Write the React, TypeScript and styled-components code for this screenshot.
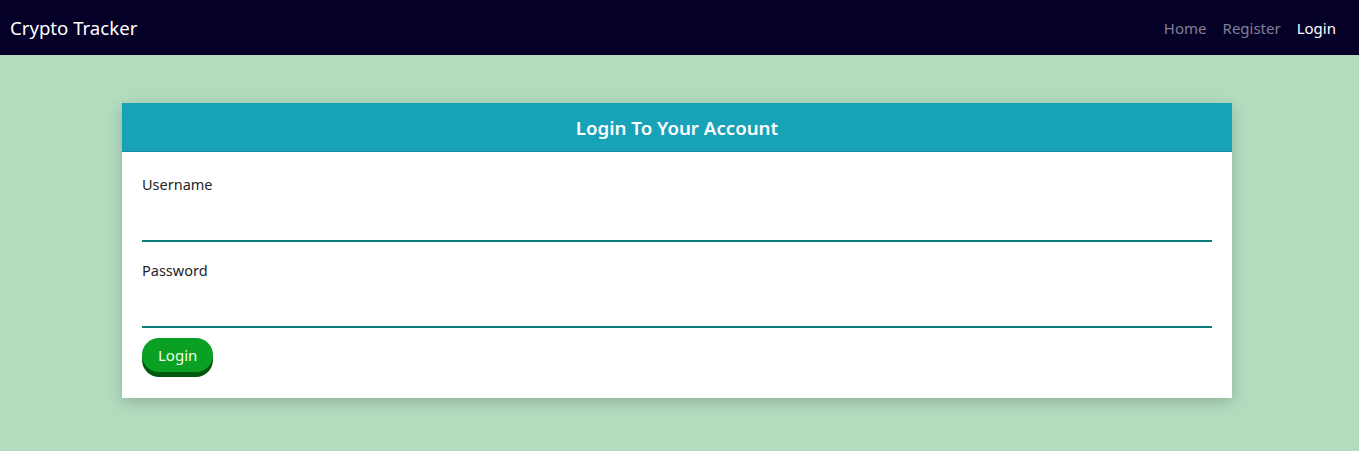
import React from "react";
import styled, { createGlobalStyle } from "styled-components";

const Global = createGlobalStyle`
  html, body { margin: 0; padding: 0; }
  body {
    background: #b3dcbf;
    font-family: "Noto Sans", "Open Sans", sans-serif;
    min-height: 451px;
  }
  * { box-sizing: border-box; }
`;

const NavBar = styled.nav`
  height: 55px;
  background: #040027;
  display: flex;
  align-items: center;
  justify-content: space-between;
  padding: 0 23px 0 10px;
`;

const Brand = styled.a`
  color: #ffffff;
  font-size: 18.6px;
  text-decoration: none;
`;

const NavLinks = styled.div`
  display: flex;
  gap: 16px;
`;

const NavLink = styled.a<{ $active?: boolean }>`
  color: ${(p) => (p.$active ? "#ffffff" : "rgba(255,255,255,0.5)")};
  font-size: 15px;
  text-decoration: none;
`;

const Main = styled.main`
  padding: 48px 127px 0 122px;
`;

const Card = styled.section`
  width: 1110px;
  background: #ffffff;
  box-shadow: 0 4px 14px rgba(0, 0, 0, 0.2);
`;

const CardHeader = styled.header`
  height: 49px;
  background: #17a2b8;
  border-bottom: 1px solid #138d9f;
  display: flex;
  align-items: center;
  justify-content: center;
  color: #ffffff;
  font-size: 18.7px;
  font-weight: 600;
`;

const CardBody = styled.form`
  padding: 20px 20px 20px 20px;
  display: flex;
  flex-direction: column;
`;

const Field = styled.div`
  display: flex;
  flex-direction: column;
  margin-bottom: 16px;
  &:last-of-type { margin-bottom: 10px; }
`;

const Label = styled.label`
  font-size: 14.5px;
  line-height: 24px;
  color: #212529;
`;

const Input = styled.input`
  height: 46px;
  border: none;
  border-bottom: 2px solid #0c7b7c;
  outline: none;
  background: transparent;
  font-size: 15px;
`;

const Button = styled.button`
  align-self: flex-start;
  height: 34px;
  padding: 0 16px;
  border: none;
  border-radius: 17px;
  background: #0aa023;
  color: #f2ffe8;
  font-family: inherit;
  font-size: 15px;
  box-shadow: 0 5px 0 #005a0e;
  margin-bottom: 6px;
  cursor: pointer;
`;

export default function App() {
  return (
    <>
      <Global />
      <NavBar>
        <Brand href="#">Crypto Tracker</Brand>
        <NavLinks>
          <NavLink href="#">Home</NavLink>
          <NavLink href="#">Register</NavLink>
          <NavLink href="#" $active>Login</NavLink>
        </NavLinks>
      </NavBar>
      <Main>
        <Card>
          <CardHeader>Login To Your Account</CardHeader>
          <CardBody onSubmit={(e) => e.preventDefault()}>
            <Field>
              <Label>Username</Label>
              <Input type="text" />
            </Field>
            <Field>
              <Label>Password</Label>
              <Input type="password" />
            </Field>
            <Button type="submit">Login</Button>
          </CardBody>
        </Card>
      </Main>
    </>
  );
}
